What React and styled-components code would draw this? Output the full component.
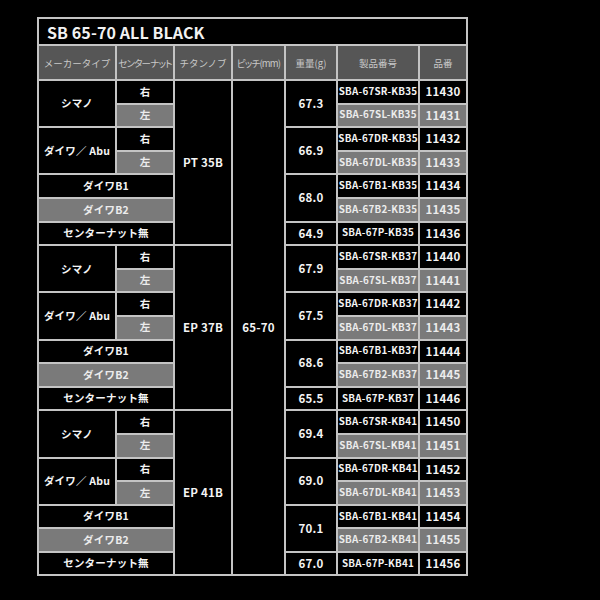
import React from "react";
import styled, { createGlobalStyle } from "styled-components";

const Global = createGlobalStyle`
  html, body { margin: 0; padding: 0; background: #000; }
  body { font-family: "Noto Sans CJK JP", "Noto Sans", sans-serif; }
`;

const Page = styled.div`
  width: 600px;
  height: 600px;
  background: #000;
  padding: 17px 0 0 37px;
  box-sizing: border-box;
`;

const Table = styled.table`
  border-collapse: collapse;
  table-layout: fixed;
  width: 429px;
  border: 2px solid #c4c4c4;
`;

const TitleCell = styled.th`
  height: 25px;
  padding: 0 0 0 8px;
  text-align: left;
  color: #f2f2f2;
  font-size: 16px;
  font-weight: 700;
  background: #000;
  border: 2px solid #c4c4c4;
  letter-spacing: 0.1px;
`;

const HeadCell = styled.th`
  height: 33px;
  padding: 0;
  background: #565656;
  color: #c9c9c9;
  font-size: 9.5px;
  font-weight: 400;
  text-align: center;
  border: 2px solid #c4c4c4;
  white-space: nowrap;
  letter-spacing: ${(p) => (p.$tight ? "-0.8px" : "0")};
  font-feature-settings: ${(p) => (p.$tight ? '"palt"' : "normal")};
`;

const Row = styled.tr`
  height: 23.6px;
`;

const sizes = { jp: "10.5px", num: "11.5px", code: "9.8px" };
const spacing = { jp: "0.2px", num: "0.2px", code: "0.25px" };

const Cell = styled.td`
  padding: 0;
  text-align: center;
  vertical-align: middle;
  background: ${(p) => (p.$gray ? "#7a7a7a" : "#000")};
  color: ${(p) => (p.$gray ? "#ececec" : "#f4f4f4")};
  font-size: ${(p) => sizes[p.$kind || "jp"]};
  letter-spacing: ${(p) => spacing[p.$kind || "jp"]};
  font-weight: 700;
  border: 2px solid #c4c4c4;
  white-space: nowrap;
  line-height: 1;
`;

const widths = [78, 58, 58, 53, 52, 82, 48];

const groups = [
  {
    knob: "PT 35B",
    kb: "KB35",
    weights: ["67.3", "66.9", "68.0", "64.9"],
    nums: [11430, 11431, 11432, 11433, 11434, 11435, 11436],
  },
  {
    knob: "EP 37B",
    kb: "KB37",
    weights: ["67.9", "67.5", "68.6", "65.5"],
    nums: [11440, 11441, 11442, 11443, 11444, 11445, 11446],
  },
  {
    knob: "EP 41B",
    kb: "KB41",
    weights: ["69.4", "69.0", "70.1", "67.0"],
    nums: [11450, 11451, 11452, 11453, 11454, 11455, 11456],
  },
];

const codes = ["67SR", "67SL", "67DR", "67DL", "67B1", "67B2", "67P"];

function Group({ g, first }) {
  const code = (i) => `SBA-${codes[i]}-${g.kb}`;
  return (
    <>
      <Row>
        <Cell rowSpan={2}>シマノ</Cell>
        <Cell>右</Cell>
        <Cell rowSpan={7} $kind="num">{g.knob}</Cell>
        {first && <Cell rowSpan={21} $kind="num">65-70</Cell>}
        <Cell rowSpan={2} $kind="num">{g.weights[0]}</Cell>
        <Cell $kind="code">{code(0)}</Cell>
        <Cell $kind="num">{g.nums[0]}</Cell>
      </Row>
      <Row>
        <Cell $gray>左</Cell>
        <Cell $gray $kind="code">{code(1)}</Cell>
        <Cell $gray $kind="num">{g.nums[1]}</Cell>
      </Row>
      <Row>
        <Cell rowSpan={2}>ダイワ／ Abu</Cell>
        <Cell>右</Cell>
        <Cell rowSpan={2} $kind="num">{g.weights[1]}</Cell>
        <Cell $kind="code">{code(2)}</Cell>
        <Cell $kind="num">{g.nums[2]}</Cell>
      </Row>
      <Row>
        <Cell $gray>左</Cell>
        <Cell $gray $kind="code">{code(3)}</Cell>
        <Cell $gray $kind="num">{g.nums[3]}</Cell>
      </Row>
      <Row>
        <Cell colSpan={2}>ダイワB1</Cell>
        <Cell rowSpan={2} $kind="num">{g.weights[2]}</Cell>
        <Cell $kind="code">{code(4)}</Cell>
        <Cell $kind="num">{g.nums[4]}</Cell>
      </Row>
      <Row>
        <Cell colSpan={2} $gray>ダイワB2</Cell>
        <Cell $gray $kind="code">{code(5)}</Cell>
        <Cell $gray $kind="num">{g.nums[5]}</Cell>
      </Row>
      <Row>
        <Cell colSpan={2}>センターナット無</Cell>
        <Cell $kind="num">{g.weights[3]}</Cell>
        <Cell $kind="code">{code(6)}</Cell>
        <Cell $kind="num">{g.nums[6]}</Cell>
      </Row>
    </>
  );
}

export default function App() {
  return (
    <Page>
      <Global />
      <Table>
        <colgroup>
          {widths.map((w, i) => (
            <col key={i} style={{ width: w }} />
          ))}
        </colgroup>
        <thead>
          <tr>
            <TitleCell colSpan={7}>SB 65-70 ALL BLACK</TitleCell>
          </tr>
          <tr>
            <HeadCell>メーカータイプ</HeadCell>
            <HeadCell $tight>センターナット</HeadCell>
            <HeadCell>チタンノブ</HeadCell>
            <HeadCell $tight>ピッチ(mm)</HeadCell>
            <HeadCell>重量(g)</HeadCell>
            <HeadCell>製品番号</HeadCell>
            <HeadCell>品番</HeadCell>
          </tr>
        </thead>
        <tbody>
          {groups.map((g, i) => (
            <Group key={g.kb} g={g} first={i === 0} />
          ))}
        </tbody>
      </Table>
    </Page>
  );
}
